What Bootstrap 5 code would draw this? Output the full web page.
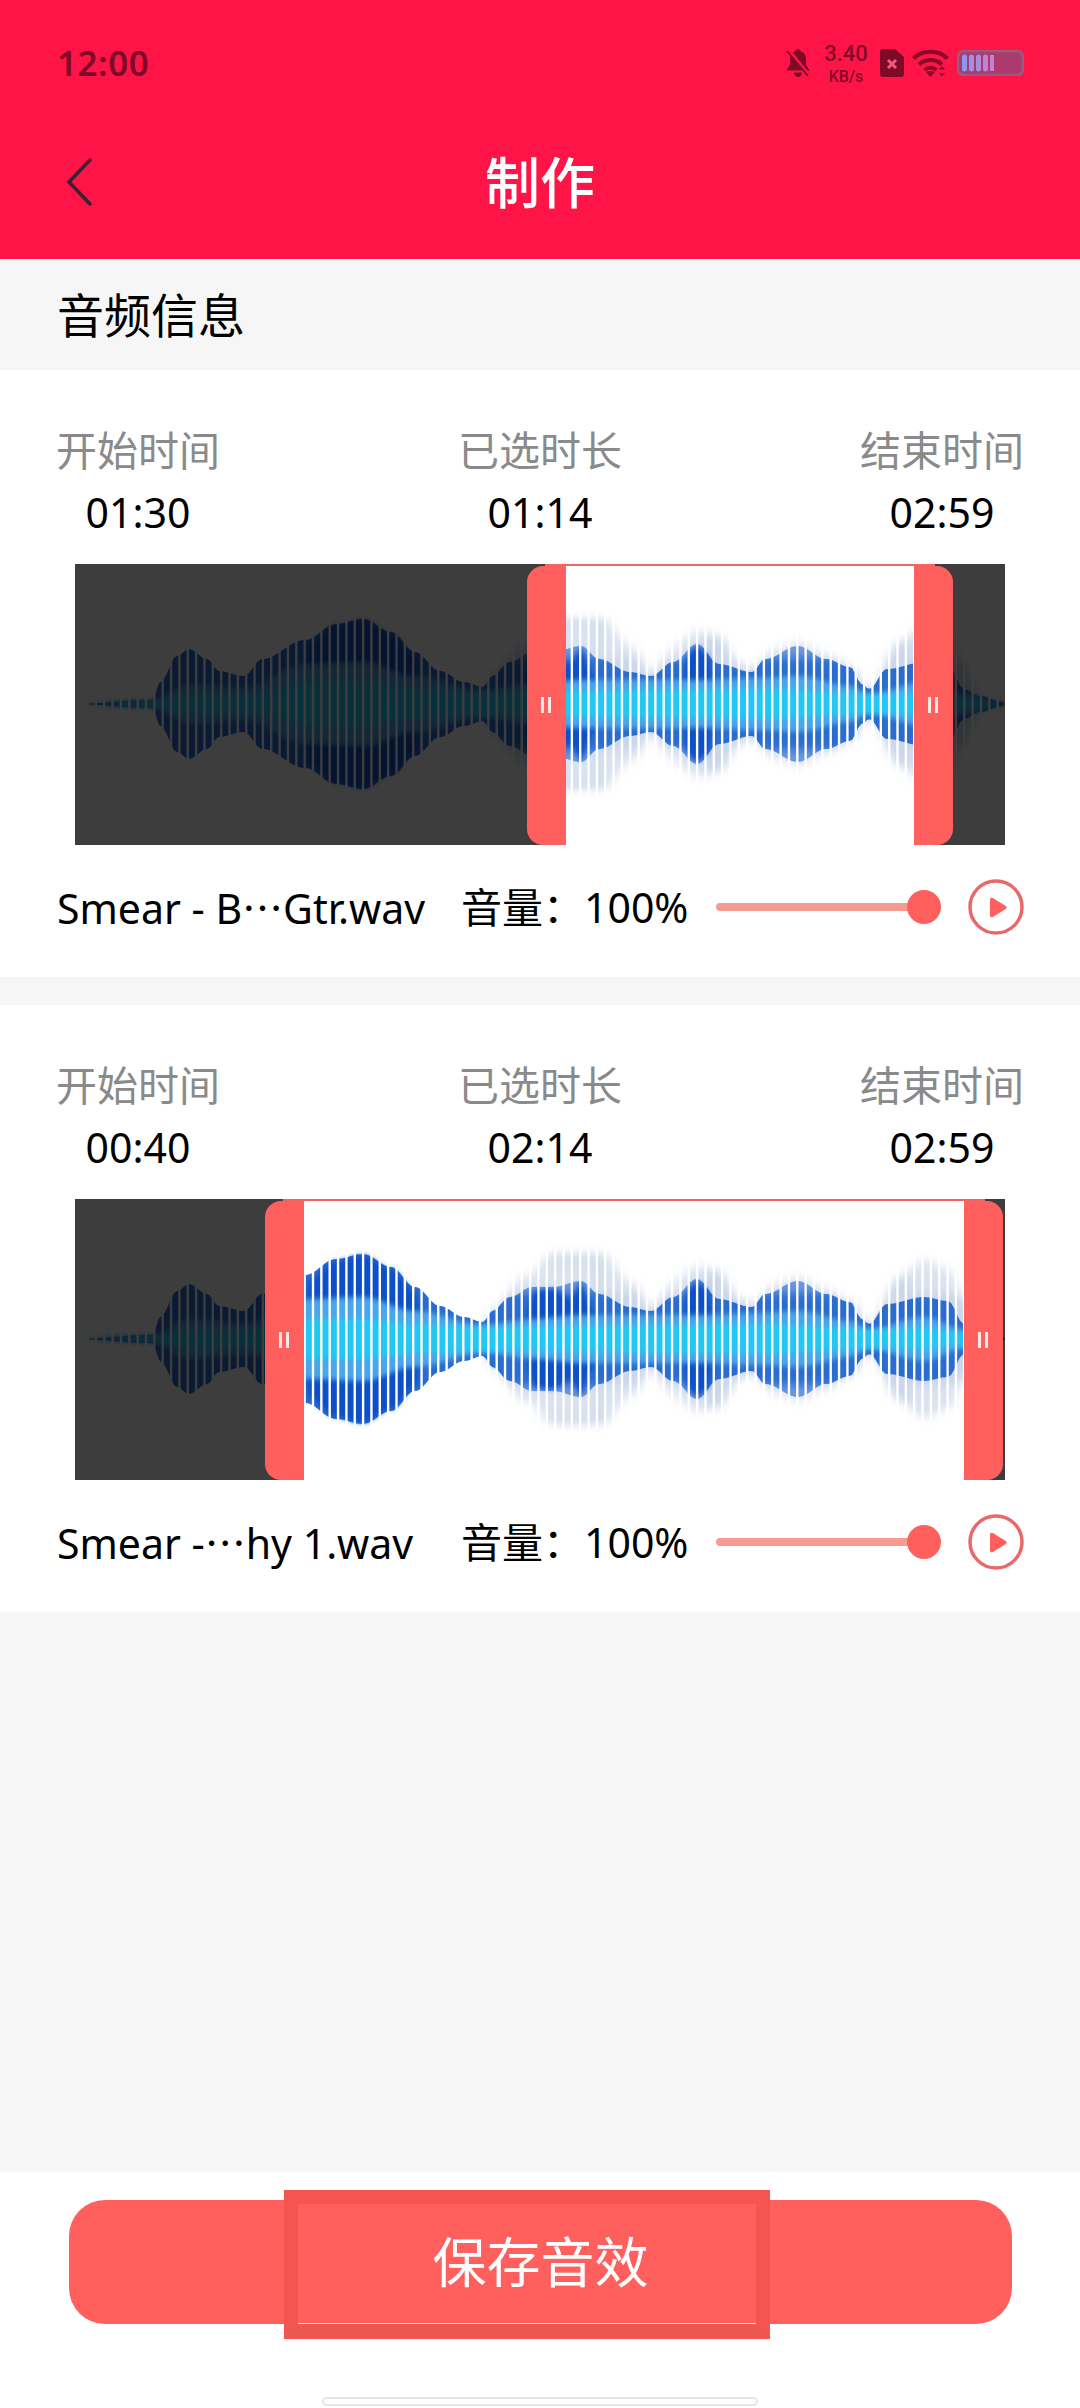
<!DOCTYPE html>
<html lang="zh-CN">
<head>
  <meta charset="UTF-8">
  <meta name="viewport" content="width=device-width, initial-scale=1">
  <title>制作</title>
  <link href="https://cdn.jsdelivr.net/npm/bootstrap@5.3.0/dist/css/bootstrap.min.css" rel="stylesheet">
  <style>
    html, body { height: 100%; }
    body { font-family: "Noto Sans", "Noto Sans CJK SC", sans-serif; background: #f6f6f6; color: #000; font-size: 41px; line-height: 56px; }
    .cjk { font-family: "Noto Sans CJK SC", sans-serif; }

    .top-head { background: #ff1447; height: 259px; flex: none; }
    .status-row { height: 126px; padding: 0 56px 0 57px; color: #7f0a28; }
    .clock { font-size: 35px; font-weight: 600; line-height: 40px; letter-spacing: .5px; }
    .speed { width: 48px; margin: 0 10px 0 12px; text-align: center; font-family: Roboto, sans-serif; font-weight: 500; }
    .speed-num { font-size: 22px; line-height: 26px; }
    .speed-unit { font-size: 16px; line-height: 19px; }
    .title-row { height: 112px; }
    .title-side { flex: 1 1 0; padding-left: 66px; }
    .page-title { font-size: 55px; line-height: 70px; font-weight: 500; color: #fff; }

    .section-label { height: 111px; padding-left: 57px; font-size: 47px; flex: none; }

    .track-card { background: #fff; height: 607px; padding: 52px 56px 0 57px; flex: none; }
    .track-card + .track-card { margin-top: 28px; }
    .time-row { margin: 0 -3px 0 -4px; white-space: nowrap; }
    .time-col { width: 170px; }
    .time-label { color: #8a8a8a; }
    .time-value { margin-top: 6px; }

    .wave-box { position: relative; width: 930px; height: 281px; margin: 24px 0 34px 18px; overflow: hidden; background: #fff; }
    .wave-box svg { display: block; }
    .wave-dim { position: absolute; top: 0; bottom: 0; background: rgba(0, 0, 0, .76); }
    .wave-top { position: absolute; top: 0; height: 2px; background: #f06462; }
    .wave-handle { position: absolute; top: 2px; bottom: 0; width: 39px; background: #ff5f5d; }
    .wave-handle.is-start { border-radius: 16px 0 0 16px; }
    .wave-handle.is-end { border-radius: 0 16px 16px 0; }
    .wave-handle::before, .wave-handle::after { content: ""; position: absolute; top: 131px; width: 3px; height: 16px; background: #ffe9e6; }
    .wave-handle::before { left: 14px; }
    .wave-handle::after { left: 21px; }

    .info-row { height: 56px; }
    .file-name { width: 404px; white-space: nowrap; }
    .volume-text { width: 255px; white-space: nowrap; }
    .vol-slider { position: relative; width: 225px; height: 34px; margin-right: 27px; }
    .vol-track { position: absolute; left: 0; top: 13px; right: 10px; height: 8px; border-radius: 4px; background: #f79a90; }
    .vol-knob { position: absolute; right: 0; top: 0; width: 34px; height: 34px; border-radius: 50%; background: #ff5f5d; }

    .bottom-bar { background: #fff; height: 236px; flex: none; padding: 28px 68px 0 69px; position: relative; }
    .save-btn { position: relative; display: block; width: 100%; height: 124px; border: 0; border-radius: 36px; background: #ff5f5d; color: #fff; font-size: 54px; line-height: 124px; padding: 0; }
    .save-mark { position: absolute; left: 215px; top: -10px; width: 486px; height: 149px; border: 14px solid #f2564f; border-bottom: 15px solid #ec5850; pointer-events: none; }
    .save-mark::after { content: ""; position: absolute; left: 0; right: 0; bottom: 0; height: 1px; background: #ffe9e6; }
    .home-pill { position: absolute; left: 322px; top: 225px; width: 436px; height: 9px; background: #fff; border: 2px solid #e6e6e6; border-radius: 5px; }
  </style>
</head>
<body class="d-flex flex-column">
  <!-- shared waveform picture, both cards use it -->
  <svg width="0" height="0" class="position-absolute">
    <defs>
      <filter id="soft" x="-5%" y="-30%" width="110%" height="160%"><feGaussianBlur stdDeviation="2.5"></feGaussianBlur></filter>
      <filter id="softer" x="-5%" y="-40%" width="110%" height="180%"><feGaussianBlur stdDeviation="5"></feGaussianBlur></filter>
      <filter id="batteryBlur"><feGaussianBlur stdDeviation=".6"></feGaussianBlur></filter>
    </defs>
    <symbol id="wave" viewBox="0 0 930 281"></symbol>
  </svg>

  <header class="top-head">
    <div class="status-row d-flex align-items-center justify-content-between">
      <span class="clock">12:00</span>
      <div class="d-flex align-items-center">
        <svg width="24" height="28" viewBox="0 0 24 28" fill="#7f0a28">
          <path d="M12 0c1.500 0 2.400 1 2.500 2.300 3.600 1 5.500 4 5.500 7.700v5.600l3.500 5.900H.5L4 15.600V10c0-3.700 1.900-6.700 5.500-7.700C9.600 1 10.500 0 12 0z"></path>
          <path d="M8 23.500h8c-.3 2.600-1.900 4.500-4 4.500s-3.700-1.900-4-4.500z"></path>
          <path d="M2.500 1l20 25" stroke="#ff1447" stroke-width="3.600"></path>
          <path d="M1 2l21 25" stroke="#7f0a28" stroke-width="1.800"></path>
        </svg>
        <div class="speed">
          <div class="speed-num">3.40</div>
          <div class="speed-unit">KB/s</div>
        </div>
        <svg class="me-2" width="24" height="28" viewBox="0 0 24 28">
          <path d="M3 0h12l9 8v17a3 3 0 0 1-3 3H3a3 3 0 0 1-3-3V3a3 3 0 0 1 3-3z" fill="#7f0a28"></path>
          <path d="M8 11l8 8M16 11l-8 8" stroke="#f25a78" stroke-width="3"></path>
        </svg>
        <svg class="me-2" width="37" height="28" viewBox="0 0 37 28" fill="none" stroke="#8a0a2a" stroke-width="4.200">
          <path d="M1.500 9.500C10.500 .5 26.500 .5 35.500 9.500"></path>
          <path d="M7 15.500c6.500-6 16.500-6 23 0"></path>
          <path d="M12.500 21c3.500-3 8.500-3 12 0"></path>
          <path d="M18.500 28l-4.500-4.800c2.800-1.700 6.200-1.700 9 0z" fill="#8a0a2a" stroke="none"></path>
          <path d="M30 17l3.200 3.500h-6.400zM30 27.500l3.200-3.500h-6.400z" fill="#8a0a2a" stroke="none"></path>
        </svg>
        <svg width="67" height="26" viewBox="0 0 67 26">
          <defs>
            <linearGradient id="cells" gradientUnits="userSpaceOnUse" x1="4" x2="40" y1="0" y2="0">
              <stop offset="0" stop-color="#7f9cf5"></stop>
              <stop offset="1" stop-color="#d47cc4"></stop>
            </linearGradient>
          </defs>
          <rect x="1" y="1" width="65" height="24" rx="6" fill="#ad3a6e" stroke="#90607e" stroke-width="2.500"></rect>
          <path d="M5 7a2.500 2.500 0 0 1 5 0v12a2.500 2.500 0 0 1-5 0zM12 7a2.500 2.500 0 0 1 5 0v12a2.500 2.500 0 0 1-5 0zM19 7a2.500 2.500 0 0 1 5 0v12a2.500 2.500 0 0 1-5 0zM26 7a2.500 2.500 0 0 1 5 0v12a2.500 2.500 0 0 1-5 0zM33 5h4v16h-4z" fill="url(#cells)" filter="url(#batteryBlur)"></path>
        </svg>
      </div>
    </div>
    <div class="title-row d-flex align-items-center">
      <div class="title-side">
        <svg class="d-block" width="26" height="48" viewBox="0 0 26 48" fill="none" stroke="#3d2035" stroke-width="3.500" stroke-linecap="round">
          <path d="M24 2L3 24l21 22"></path>
        </svg>
      </div>
      <div class="page-title">制作</div>
      <div class="title-side"></div>
    </div>
  </header>

  <div class="section-label d-flex align-items-center">音频信息</div>

  <main id="trackList"></main>

  <div class="flex-grow-1"></div>

  <footer class="bottom-bar">
    <button class="save-btn" type="button">保存音效<span class="save-mark"></span></button>
    <div class="home-pill"></div>
  </footer>

  <script>
    // envelope points: [x, half height] in waveform px
    const outline = [[0,0],[77,4],[86,23],[102,48],[114,55],[132,45],[144,33],[169,28],[187,45],[230,64],[261,80],[288,85],[316,72],[340,52],[365,33],[389,22],[408,17],[417,28],[435,42],[457,52],[478,52],[506,58],[524,45],[555,32],[576,28],[598,42],[622,60],[644,40],[677,32],[690,45],[723,58],[751,45],[775,37],[787,20],[794,15],[812,35],[849,42],[873,38],[889,15],[904,8],[928,2],[930,0]];
    const halo = [[410,18],[417,30],[450,62],[480,85],[525,85],[560,55],[576,30],[600,60],[622,72],[644,68],[665,40],[677,35],[700,55],[723,62],[751,50],[775,38],[794,15],[825,62],[849,78],[873,70],[889,40],[905,8],[910,0]];
    const middle = [[0,0],[77,3],[114,20],[169,16],[230,40],[288,42],[340,28],[408,14],[457,20],[506,24],[598,24],[622,24],[690,26],[723,28],[775,18],[794,10],[849,22],[889,10],[928,1],[930,0]];
    const core = [[0,0],[77,3],[114,9],[169,8],[230,20],[288,20],[340,15],[408,12],[506,13],[598,14],[690,15],[775,11],[794,9],[849,11],[889,6],[928,1],[930,0]];
    const deep = [[225,0],[235,60],[261,78],[288,84],[316,70],[340,48],[350,0],[445,0],[460,48],[478,50],[495,40],[506,56],[516,30],[530,0],[605,0],[614,52],[622,58],[632,50],[642,0],[650,0]];
    // stretches where the outer part of the bars washes out
    const washes = [[425,95],[525,80],[575,55],[665,105],[770,40],[835,55]];

    function valueAt(points, x) {
      if (x <= points[0][0] || x >= points[points.length - 1][0]) return 0;
      for (let i = 1; i < points.length; i++) {
        if (x <= points[i][0]) {
          const t = (x - points[i - 1][0]) / (points[i][0] - points[i - 1][0]);
          const k = (1 - Math.cos(t * Math.PI)) / 2;
          return points[i - 1][1] + (points[i][1] - points[i - 1][1]) * k;
        }
      }
      return 0;
    }

    function shapePath(points) {
      const mid = 140;
      let up = "", down = "";
      for (let x = points[0][0]; x <= points[points.length - 1][0]; x += 3) {
        const h = valueAt(points, x);
        up += (up ? "L" : "M") + x + " " + (mid - h).toFixed(1);
        down = "L" + x + " " + (mid + h).toFixed(1) + down;
      }
      return up + down + "Z";
    }

    function buildWave() {
      let gaps = "";
      for (let x = 3; x < 930; x += 8.35) {
        gaps += '<rect x="' + x.toFixed(2) + '" y="0" width="2.4" height="281" fill="#fff"></rect>';
      }
      let wash = "";
      washes.forEach(w => {
        wash += '<rect x="' + w[0] + '" y="60" width="' + w[1] + '" height="34" fill="#fff" opacity=".3"></rect>' +
          '<rect x="' + w[0] + '" y="186" width="' + w[1] + '" height="34" fill="#fff" opacity=".3"></rect>';
      });
      document.getElementById("wave").innerHTML =
        '<path d="' + shapePath(halo) + '" fill="#a8bbdc" opacity=".6" filter="url(#softer)"></path>' +
        '<path d="' + shapePath(outline) + '" fill="#2a6cd0"></path>' +
        '<g filter="url(#softer)">' + wash + '</g>' +
        '<path d="' + shapePath(deep) + '" fill="#0f50c8" filter="url(#soft)"></path>' +
        '<path d="' + shapePath(middle) + '" fill="#4aa6ea" filter="url(#soft)"></path>' +
        '<path d="' + shapePath(core) + '" fill="#20c8f5" filter="url(#soft)"></path>' +
        gaps;
    }

    // handle positions are px inside the waveform box
    const tracks = [
      { start: "01:30", picked: "01:14", end: "02:59", nameA: "Smear - B", nameB: "Gtr.wav", left: 452, right: 839 },
      { start: "00:40", picked: "02:14", end: "02:59", nameA: "Smear -", nameB: "hy 1.wav", left: 190, right: 889 }
    ];

    function renderTracks() {
      let html = "";
      tracks.forEach(t => {
        html += `
        <section class="track-card">
          <div class="time-row d-flex justify-content-between text-center">
            <div class="time-col"><div class="time-label">开始时间</div><div class="time-value">${t.start}</div></div>
            <div class="time-col"><div class="time-label">已选时长</div><div class="time-value">${t.picked}</div></div>
            <div class="time-col"><div class="time-label">结束时间</div><div class="time-value">${t.end}</div></div>
          </div>
          <div class="wave-box">
            <svg width="930" height="281"><use href="#wave"></use></svg>
            <div class="wave-dim" style="left:0;width:${t.left + 39}px"></div>
            <div class="wave-dim" style="left:${t.right}px;right:0"></div>
            <div class="wave-top" style="left:${t.left + 18}px;width:${t.right - t.left + 3}px"></div>
            <div class="wave-handle is-start" style="left:${t.left}px"></div>
            <div class="wave-handle is-end" style="left:${t.right}px"></div>
          </div>
          <div class="info-row d-flex align-items-center">
            <div class="file-name">${t.nameA}<span class="cjk">…</span>${t.nameB}</div>
            <div class="volume-text">音量：100%</div>
            <div class="vol-slider"><div class="vol-track"></div><div class="vol-knob"></div></div>
            <svg width="56" height="56" viewBox="0 0 56 56">
              <circle cx="28" cy="28" r="26" fill="none" stroke="#e9686a" stroke-width="3.500"></circle>
              <path d="M22 20.500c0-1.500 1.500-2.300 2.800-1.500l13 8c1.100.7 1.100 2.300 0 3l-13 8c-1.300.8-2.800 0-2.800-1.500z" fill="#ff5f5d"></path>
            </svg>
          </div>
        </section>`;
      });
      document.getElementById("trackList").innerHTML = html;
    }

    buildWave();
    renderTracks();
  </script>
  <script src="https://cdn.jsdelivr.net/npm/bootstrap@5.3.0/dist/js/bootstrap.bundle.min.js"></script>
</body>
</html>
